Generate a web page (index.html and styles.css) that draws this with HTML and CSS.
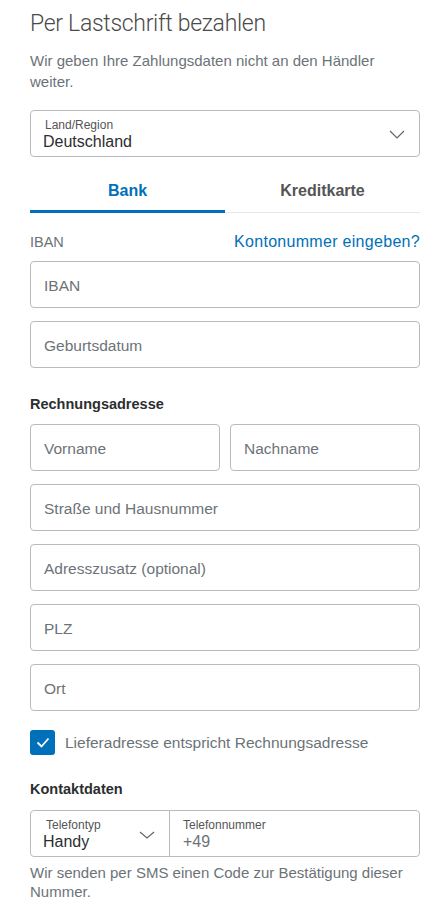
FILE: index.html
```html
<!DOCTYPE html>
<html lang="de">
<head>
<meta charset="utf-8">
<title>Per Lastschrift bezahlen</title>
<link rel="stylesheet" href="styles.css">
</head>
<body>
<main class="page">
  <h1 class="title">Per Lastschrift bezahlen</h1>
  <p class="intro">Wir geben Ihre Zahlungsdaten nicht an den Händler weiter.</p>

  <div class="field select">
    <div class="select-text">
      <span class="small-label">Land/Region</span>
      <span class="value">Deutschland</span>
    </div>
    <svg class="chevron" width="16" height="9" viewBox="0 0 16 9"><path d="M1 1l7 7 7-7" fill="none" stroke="#666" stroke-width="1.2"/></svg>
  </div>

  <div class="tabs">
    <div class="tab active">Bank</div>
    <div class="tab">Kreditkarte</div>
  </div>

  <div class="iban-row">
    <span class="iban-label">IBAN</span>
    <a class="link">Kontonummer eingeben?</a>
  </div>

  <div class="field">IBAN</div>
  <div class="field">Geburtsdatum</div>

  <h2 class="section billing">Rechnungsadresse</h2>
  <div class="row2">
    <div class="field">Vorname</div>
    <div class="field">Nachname</div>
  </div>
  <div class="field">Straße und Hausnummer</div>
  <div class="field">Adresszusatz (optional)</div>
  <div class="field">PLZ</div>
  <div class="field">Ort</div>

  <label class="check">
    <span class="box"><svg width="14" height="11" viewBox="0 0 14 11"><path d="M1.5 5.5l4 4 7-8" fill="none" stroke="#fff" stroke-width="1.8"/></svg></span>
    <span>Lieferadresse entspricht Rechnungsadresse</span>
  </label>

  <h2 class="section contact">Kontaktdaten</h2>
  <div class="phone">
    <div class="phone-type">
      <div class="select-text">
        <span class="small-label">Telefontyp</span>
        <span class="value">Handy</span>
      </div>
      <svg class="chevron small" width="16" height="8" viewBox="0 0 16 8"><path d="M1 1l7 6 7-6" fill="none" stroke="#666" stroke-width="1.2"/></svg>
    </div>
    <div class="phone-num">
      <span class="small-label">Telefonnummer</span>
      <span class="value muted">+49</span>
    </div>
  </div>
  <p class="hint">Wir senden per SMS einen Code zur Bestätigung dieser Nummer.</p>
</main>
</body>
</html>
```

FILE: styles.css
```css
* { box-sizing: border-box; }
html, body { margin: 0; padding: 0; background: #fff; }
body {
  font-family: "Liberation Sans", Arial, sans-serif;
  color: #2c2e2f;
  width: 444px;
  overflow: hidden;
}
.page { padding: 0 24px 0 30px; }
.title {
  margin: 0;
  padding-top: 10px;
  font-family: Roboto, "Liberation Sans", sans-serif;
  font-weight: 300;
  font-size: 23px;
  line-height: 28px;
  letter-spacing: -0.3px;
  color: #4a4a4a;
}
.intro {
  margin: 12px 0 0;
  font-size: 15px;
  line-height: 21px;
  color: #6c7378;
}
.field {
  height: 47px;
  border: 1px solid #b9bcbf;
  border-radius: 4px;
  padding: 2px 13px 0;
  display: flex;
  align-items: center;
  font-size: 15.5px;
  color: #6c7378;
  margin-bottom: 13px;
}
.select {
  margin-top: 18px;
  margin-bottom: 0;
  padding: 0 14px 0 12px;
  justify-content: space-between;
}
.select-text {
  display: flex;
  flex-direction: column;
  padding-top: 3px;
}
.small-label {
  font-size: 12px;
  line-height: 14px;
  color: #555;
  padding-left: 2px;
}
.value { font-size: 16px; line-height: 20px; color: #2c2e2f; }
.value.muted { color: #6c7378; }
.chevron { display: block; margin-top: 2px; }
.chevron.small { margin-top: 3px; }
.tabs {
  display: flex;
  margin-top: 20px;
  border-bottom: 1px solid #e6e8e9;
}
.tab {
  flex: 1;
  text-align: center;
  font-size: 16px;
  font-weight: bold;
  color: #555;
  padding: 5px 0 10px;
  line-height: 18px;
}
.tab.active {
  color: #0070ba;
  border-bottom: 3px solid #0070ba;
  margin-bottom: -1px;
}
.iban-row {
  display: flex;
  justify-content: space-between;
  align-items: baseline;
  line-height: 18px;
  margin-top: 20px;
  margin-bottom: 10px;
}
.iban-label { font-size: 14.5px; color: #6c7378; }
.link { font-size: 16px; letter-spacing: 0.3px; color: #0070ba; }
.section {
  font-size: 14.5px;
  line-height: 18px;
  font-weight: bold;
  color: #2c2e2f;
}
.section.billing { margin: 27px 0 11px; }
.section.contact { margin: 25px 0 12px; }
.row2 {
  display: grid;
  grid-template-columns: 190px 190px;
  column-gap: 10px;
}
.check {
  display: flex;
  align-items: center;
  gap: 10px;
  height: 25px;
  font-size: 15.5px;
  color: #6c7378;
  margin-top: 19px;
}
.box {
  width: 25px;
  height: 25px;
  border-radius: 3px;
  background: #0070ba;
  display: flex;
  align-items: center;
  justify-content: center;
}
.phone {
  display: flex;
  height: 47px;
  border: 1px solid #b9bcbf;
  border-radius: 4px;
}
.phone-type {
  width: 139px;
  border-right: 1px solid #b9bcbf;
  display: flex;
  align-items: center;
  justify-content: space-between;
  padding: 0 14px 0 12px;
}
.phone-type .small-label { padding-left: 3px; }
.phone-num {
  flex: 1;
  display: flex;
  flex-direction: column;
  justify-content: center;
  padding: 3px 0 0 13px;
}
.phone-num .small-label { padding-left: 0; }
.hint {
  margin: 6px 0 0;
  font-size: 15px;
  line-height: 19px;
  color: #6c7378;
}
```
